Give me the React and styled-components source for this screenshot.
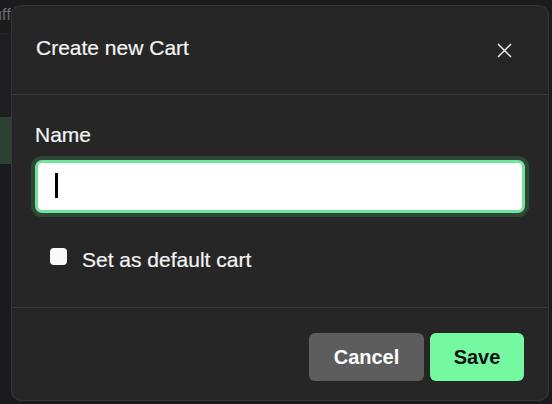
import React from "react";
import styled, { createGlobalStyle } from "styled-components";

const Global = createGlobalStyle`
  html, body {
    margin: 0;
    padding: 0;
    background: #1b1b1d;
    font-family: "Liberation Sans", Arial, sans-serif;
  }
`;

const Page = styled.div`
  position: relative;
  width: 552px;
  height: 404px;
  overflow: hidden;
  background: #1b1b1d;
`;

const Side = styled.div`
  width: 11px;
  height: 100%;
  display: flex;
  flex-direction: column;
  overflow: hidden;
`;

const SideTop = styled.div`
  height: 34px;
  display: flex;
  justify-content: flex-end;
  align-items: center;
  padding-bottom: 4px;
  box-sizing: border-box;
  border-bottom: 1px solid #26262a;
  color: #6a6a6e;
  font-size: 17px;
  white-space: nowrap;
`;

const SideGap = styled.div`
  height: 83px;
  background: #1e1e20;
`;

const SideActive = styled.div`
  height: 47px;
  background: #2b4131;
`;

const Modal = styled.div`
  position: absolute;
  top: 5px;
  left: 11px;
  width: 538px;
  height: 396px;
  box-sizing: border-box;
  background: #262626;
  border: 1px solid #363636;
  border-radius: 10px;
  display: flex;
  flex-direction: column;
  color: #fff;
`;

const Header = styled.div`
  height: 88px;
  display: flex;
  align-items: center;
  justify-content: space-between;
  padding: 0 24px;
  border-bottom: 1px solid #3a3a3a;
`;

const Title = styled.h2`
  margin: 0 0 4px;
  font-size: 21px;
  font-weight: 400;
  color: #f4f4f4;
  -webkit-text-stroke: 0.2px #f4f4f4;
`;

const Close = styled.button`
  width: 40px;
  height: 40px;
  padding: 0;
  border: 0;
  background: none;
  display: flex;
  align-items: center;
  justify-content: center;
  color: #eee;
`;

const Body = styled.div`
  flex: 1;
  padding: 28px 23px 0;
  display: flex;
  flex-direction: column;
  border-bottom: 1px solid #3a3a3a;
`;

const Label = styled.label`
  font-size: 21px;
  line-height: 24px;
  color: #f4f4f4;
  -webkit-text-stroke: 0.2px #f4f4f4;
  margin-bottom: 13px;
`;

const Field = styled.div`
  height: 53px;
  box-sizing: border-box;
  background: #fff;
  border: 3px solid #72e49a;
  border-radius: 7px;
  box-shadow: 0 0 0 4px #2e4736;
  display: flex;
  align-items: center;
  padding-left: 17px;
`;

const Caret = styled.span`
  width: 3px;
  height: 25px;
  background: #000;
  margin-top: -2px;
`;

const CheckRow = styled.label`
  display: flex;
  align-items: flex-start;
  gap: 15px;
  margin-top: 35px;
  padding-left: 15px;
  font-size: 21px;
  line-height: 24px;
  color: #f4f4f4;
  -webkit-text-stroke: 0.2px #f4f4f4;
`;

const Box = styled.span`
  flex: none;
  width: 17px;
  height: 17px;
  border-radius: 4px;
  background: #fafafa;
`;

const Footer = styled.div`
  display: flex;
  justify-content: flex-end;
  gap: 6px;
  padding: 25px 24px 19px;
`;

const Button = styled.button`
  height: 48px;
  padding: 0;
  width: ${p => p.w}px;
  border: 0;
  border-radius: 6px;
  font-family: inherit;
  font-size: 20px;
  font-weight: 700;
  background: ${p => (p.primary ? "#74f8a0" : "#5d5d5d")};
  color: ${p => (p.primary ? "#111" : "#fff")};
`;

export default function App() {
  return (
    <Page>
      <Global />
      <Side>
        <SideTop>Stuff</SideTop>
        <SideGap />
        <SideActive />
      </Side>
      <Modal>
        <Header>
          <Title>Create new Cart</Title>
          <Close aria-label="Close">
            <svg width="15" height="15" viewBox="0 0 15 15">
              <path d="M1 1L14 14M14 1L1 14" stroke="currentColor" strokeWidth="1.5" />
            </svg>
          </Close>
        </Header>
        <Body>
          <Label>Name</Label>
          <Field>
            <Caret />
          </Field>
          <CheckRow>
            <Box />
            Set as default cart
          </CheckRow>
        </Body>
        <Footer>
          <Button w={115}>Cancel</Button>
          <Button w={94} primary>
            Save
          </Button>
        </Footer>
      </Modal>
    </Page>
  );
}
